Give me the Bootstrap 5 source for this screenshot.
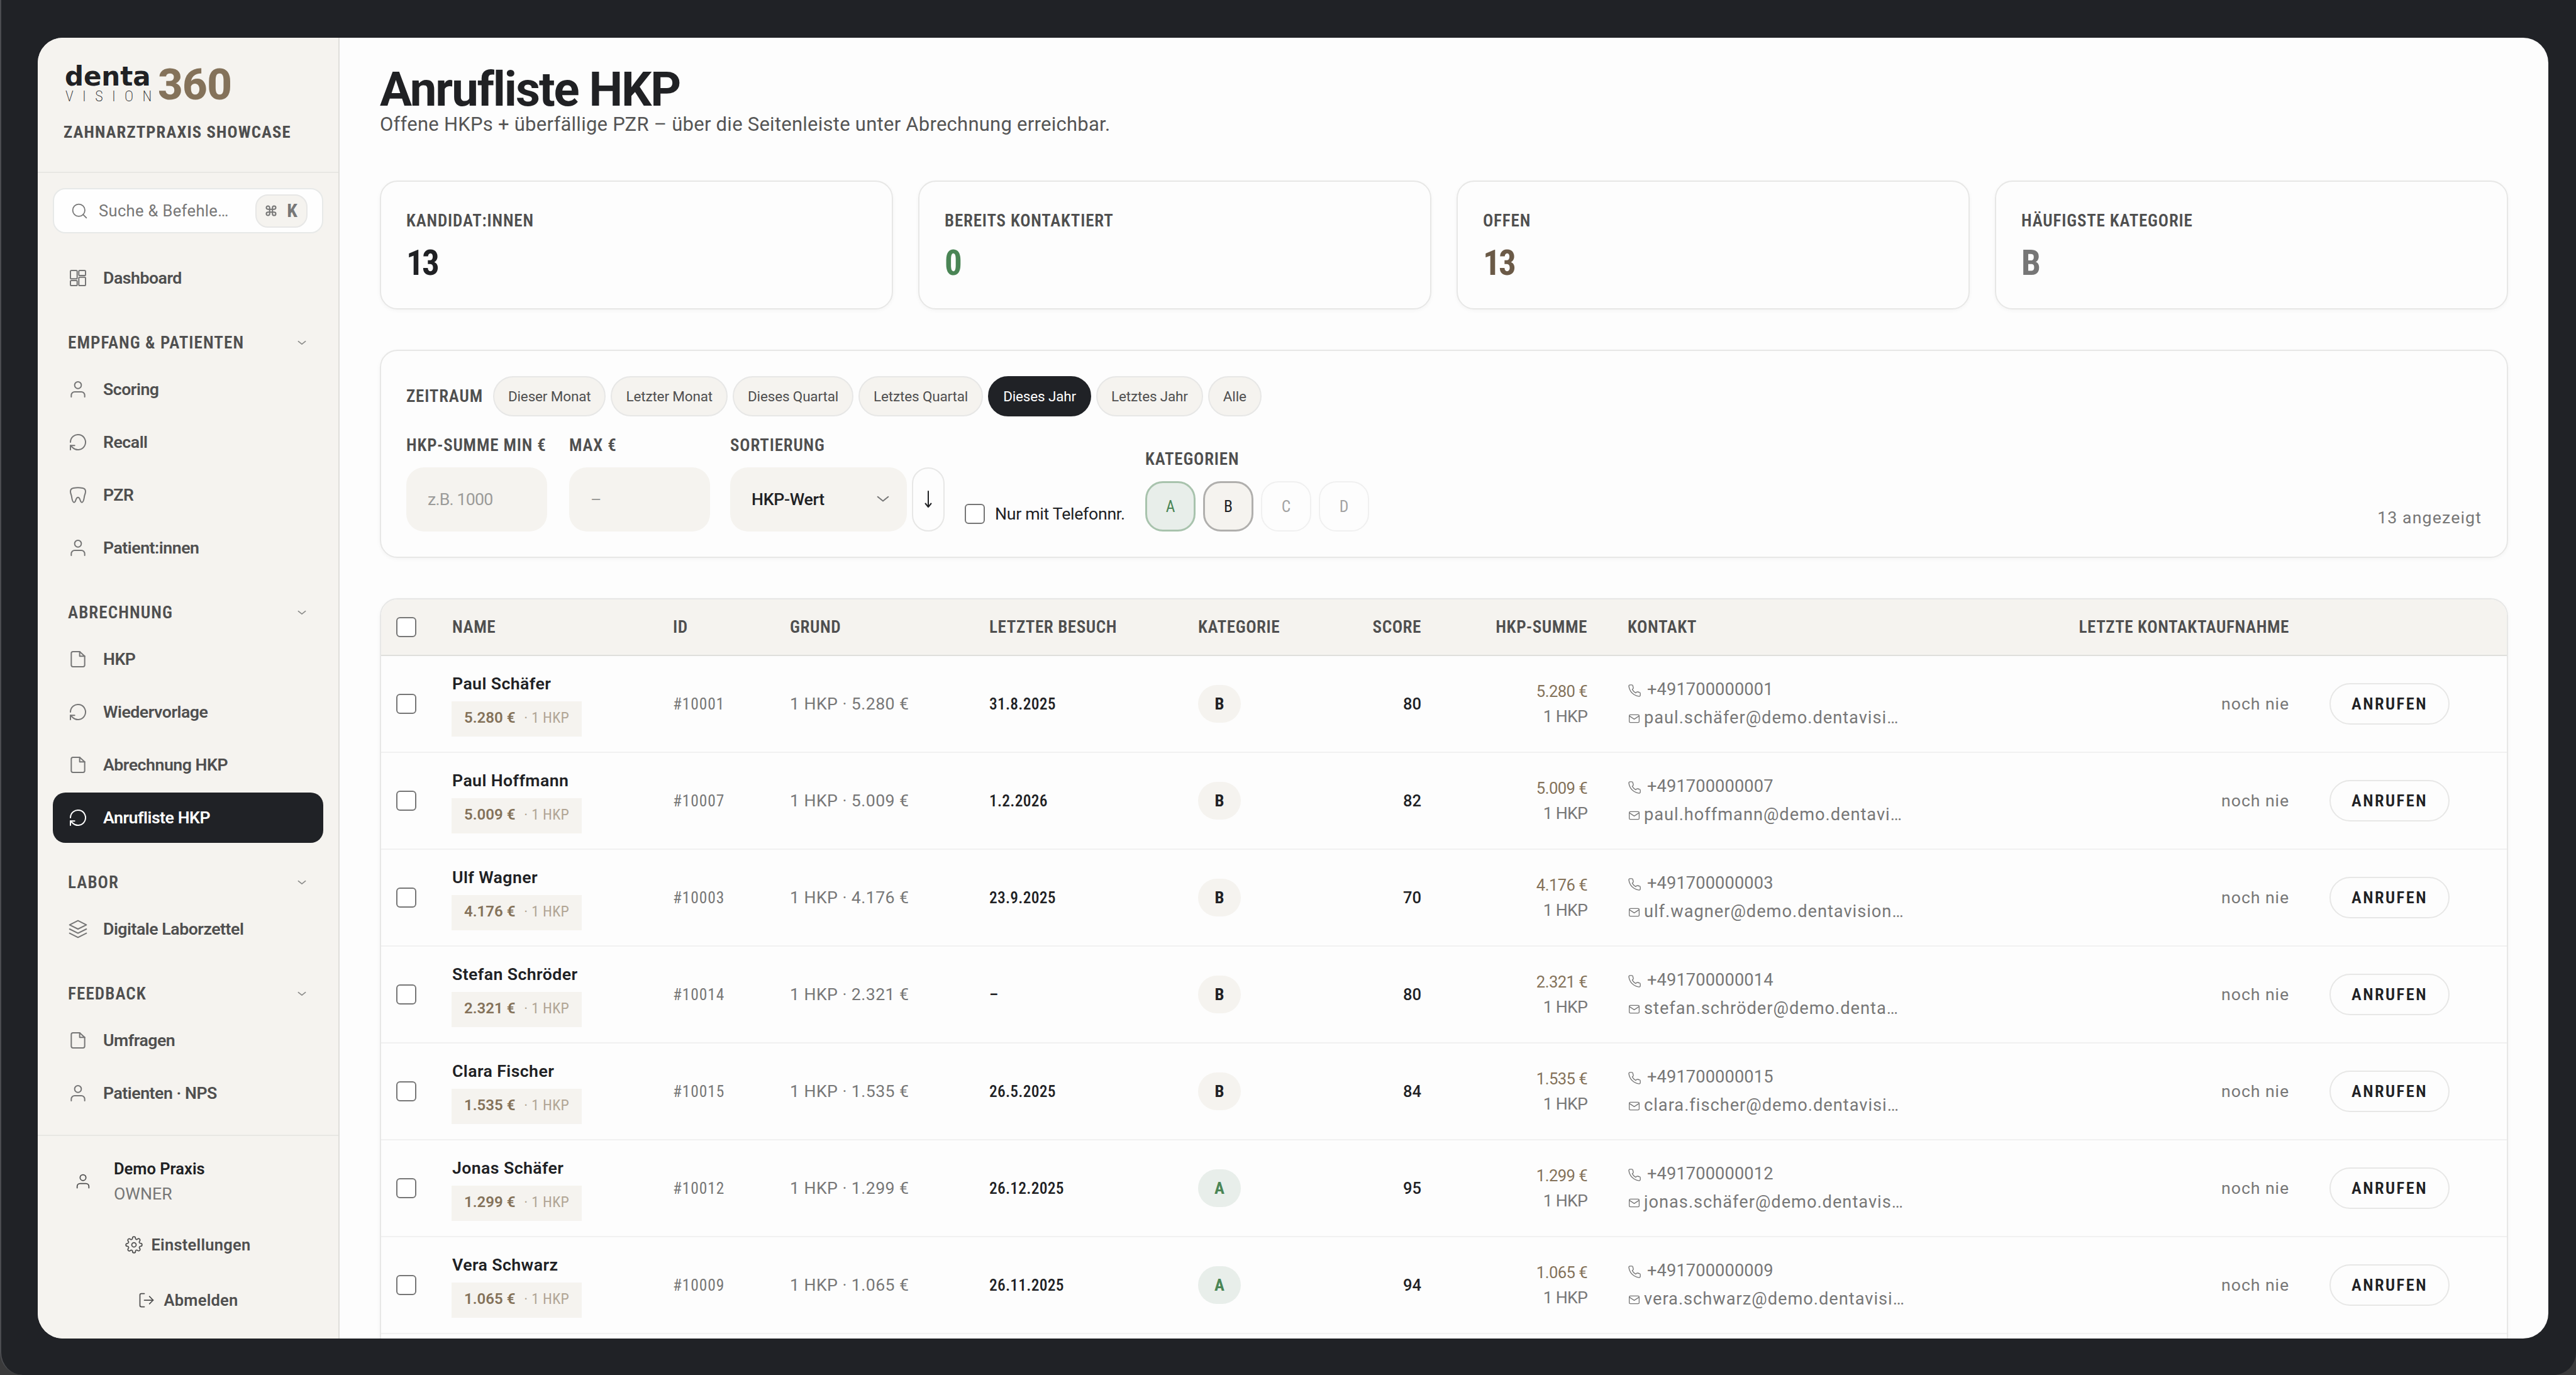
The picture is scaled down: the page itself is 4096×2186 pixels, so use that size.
<!DOCTYPE html>
<html lang="de">
<head>
	<meta charset="UTF-8" />
	<meta name="viewport" content="width=device-width, initial-scale=1.0" />
	<title>Anrufliste HKP</title>
	<link href="https://cdn.jsdelivr.net/npm/bootstrap@5.3.3/dist/css/bootstrap.min.css" rel="stylesheet" />

	<style>
		:root {
			--ink: #202124;
			--ink-2: #4f4f4f;
			--ink-3: #777777;
			--sand: #f5f3ef;
			--line: #e7e7e6;
			--gold: #84725a;
			--green: #4a8555;
		}

		html {
			background: #3a3a3b;
		}

		body {
			height: 2186px;
			margin: 0;
			padding: 60px 44px 58px 58px;
			background: #202226;
			border-left: 2px solid #4b4c50;
			border-radius: 0 0 36px 36px;
			overflow: hidden;
			color: var(--ink);
			font-family: Roboto, "Liberation Sans", sans-serif;
			font-size: 26.7px;
			line-height: 40px;
		}

		svg {
			fill: none;
			stroke: currentColor;
			stroke-width: 1.5;
			stroke-linecap: round;
			stroke-linejoin: round;
			flex: none;
		}

		.app {
			border-radius: 40px;
			background: #fdfdfd;
		}

		/* sidebar */
		.side {
			width: 480px;
			flex: none;
			background: var(--sand);
			border-right: 2px solid #dfdeda;
		}

		.side-head {
			height: 215px;
			padding: 44px 41px 0;
			border-bottom: 2px solid #e8e7e3;
		}

		.logo-text {
			width: 150px;
			padding-left: 2px;
		}

		.logo-denta {
			font: bold 42px/36px "DejaVu Sans", sans-serif;
			letter-spacing: -.1px;
		}

		.logo-vision {
			font-size: 24px;
			font-stretch: 75%;
			font-weight: 200;
			line-height: 26px;
			letter-spacing: 14.3px;
			padding-left: 1px;
			white-space: nowrap;
		}

		.logo-360 {
			font-size: 69px;
			font-weight: 800;
			line-height: 62px;
			letter-spacing: -.01em;
			color: var(--gold);
		}

		.praxis {
			font-stretch: 75%;
			font-weight: 700;
			letter-spacing: .041em;
			color: var(--ink-2);
			margin-top: 24px;
		}

		.search {
			height: 72px;
			margin: 24px 24px 31px;
			padding: 0 23px 0 26px;
			border: 2px solid #e7e9e8;
			border-radius: 20px;
			background: #fefefe;
			color: var(--ink-3);
			font-size: 25.5px;
			letter-spacing: .014em;
		}

		.keys {
			width: 83px;
			height: 53px;
			border: 2px solid var(--line);
			border-radius: 20px;
			background: var(--sand);
		}

		.keys svg {
			stroke-width: 2.8;
		}

		.keys b {
			font-size: 30px;
			font-stretch: 75%;
			letter-spacing: 0;
		}

		.side-item {
			height: 80px;
			margin: 0 24px 4px 24px;
			padding-left: 24px;
			gap: 24px;
			border-radius: 20px;
			font-weight: 600;
			letter-spacing: -.018em;
			color: var(--ink-2);
		}

		.side-item svg {
			width: 32px;
			height: 32px;
			color: #767676;
		}

		.side-item.active,
		.side-item.active svg {
			background: #202226;
			color: #fff;
		}

		.side-group {
			height: 93px;
			padding: 25px 51px 0 48px;
			font-stretch: 75%;
			font-weight: 600;
			font-size: 27.2px;
			letter-spacing: .038em;
			color: var(--ink-2);
		}

		.side-foot {
			height: 324px;
			padding: 32px 24px 0;
			border-top: 2px solid #e8e7e3;
			color: var(--ink-2);
		}

		.user-icon {
			margin: 0 35px 0 34px;
		}

		.user-name {
			font-weight: 600;
			font-size: 25.5px;
			color: var(--ink);
		}

		.side-btn {
			height: 80px;
			margin-bottom: 8px;
			gap: 13px;
			font-weight: 600;
			font-size: 25.5px;
			letter-spacing: .01em;
		}

		/* content */
		.content {
			padding: 45px 64px 0;
			min-width: 0;
		}

		.content h1 {
			font-size: 76px;
			font-weight: 700;
			line-height: 74px;
			letter-spacing: -.027em;
			margin: 0;
		}

		.sub {
			font-size: 31px;
			line-height: 37px;
			letter-spacing: .008em;
			color: #555;
			margin-bottom: 71px;
		}

		.panel {
			border: 2px solid var(--line);
			border-radius: 28px;
			box-shadow: 0 2px 6px rgba(0, 0, 0, .04);
		}

		.stat {
			height: 205px;
			padding: 42px 40px 41px;
			flex: 1;
		}

		.cap-label {
			font-stretch: 75%;
			font-weight: 600;
			font-size: 27px;
			color: var(--ink-2);
			letter-spacing: .031em;
			white-space: nowrap;
		}

		.stat-value {
			font-size: 55px;
			font-weight: 700;
			font-stretch: 75%;
			line-height: 60px;
			letter-spacing: -.05em;
			margin-top: 17px;
		}

		.filters {
			height: 331px;
			padding: 40px;
			margin: 64px 0;
		}

		.period {
			height: 64px;
			padding: 0 22px;
			border: 2px solid var(--line);
			border-radius: 32px;
			background: var(--sand);
			color: var(--ink-2);
			font-size: 22.5px;
			letter-spacing: -.007em;
		}

		.period.active {
			background: #202226;
			border-color: #202226;
			color: #fff;
		}

		.filter-label {
			line-height: 32px;
			margin-bottom: 20px;
			padding-top: 1px;
			height: 32px;
		}

		.field {
			height: 102px;
			padding: 0 34px;
			border-radius: 28px;
			background: var(--sand);
			letter-spacing: -.03em;
		}

		.sort-field {
			width: 281px;
			padding-right: 28px;
			font-weight: 500;
			letter-spacing: -.011em;
		}

		.sort-field svg {
			color: #767676;
			stroke-width: 1.2;
		}

		.dir-btn {
			width: 52px;
			height: 102px;
			border: 2px solid var(--line);
			border-radius: 26px;
		}

		.tick {
			display: block;
			flex: none;
			width: 32px;
			height: 32px;
			border: 2px solid #767676;
			border-radius: 6px;
			background: #fff;
		}

		.phone-only {
			width: 255px;
			height: 57px;
			letter-spacing: -.011em;
			white-space: nowrap;
		}

		.cat-btn {
			width: 80px;
			height: 80px;
			border: 2px solid #f0f0f0;
			border-radius: 28px;
			color: #a3a3a3;
			font-size: 25.5px;
			font-stretch: 75%;
		}

		.cat-a {
			border: 3px solid #a8c3ad;
			background: #e8eeea;
			color: var(--green);
		}

		.cat-b {
			border: 3px solid #b0afad;
			background: var(--sand);
			color: var(--ink);
		}

		.shown {
			line-height: 44px;
			letter-spacing: .042em;
		}

		/* call list */
		.calls {
			height: 1300px;
			overflow: hidden;
			flex: none;
		}

		.calls table {
			width: 3380px;
			table-layout: fixed;
			white-space: nowrap;
		}

		.calls th {
			height: 89px;
			padding: 0 32px;
			background: var(--sand);
			border-bottom: 2px solid #dfdfdc;
			color: var(--ink-2);
			font-size: 27.2px;
			font-stretch: 75%;
			font-weight: 600;
			letter-spacing: .02em;
		}

		.calls td {
			height: 154px;
			padding: 0 32px;
			border-bottom: 2px solid #f1f1f1;
			vertical-align: middle;
		}

		.calls th:first-child,
		.calls td:first-child {
			padding: 0 24px;
		}

		.who {
			font-weight: 600;
			letter-spacing: .015em;
		}

		.sum-tag {
			display: inline-flex;
			gap: 14px;
			height: 56px;
			line-height: 53px;
			margin: 8px 0 0 -1px;
			padding: 0 20px;
			background: var(--sand);
			color: var(--gold);
			font-size: 24px;
		}

		.sum-tag b {
			font-weight: 600;
			letter-spacing: 0;
		}

		.sum-tag span {
			font-stretch: 75%;
			letter-spacing: .01em;
			opacity: .6;
		}

		.muted {
			color: var(--ink-3);
		}

		.num {
			font-size: 25.5px;
		}

		.id {
			font-stretch: 75%;
			letter-spacing: .034em;
		}

		.visit {
			font-stretch: 75%;
			font-weight: 500;
			letter-spacing: .01em;
		}

		.grade {
			display: flex;
			align-items: center;
			justify-content: center;
			width: 68px;
			height: 60px;
			border-radius: 30px;
			background: var(--sand);
			font-weight: 700;
			font-stretch: 75%;
		}

		.grade-A {
			background: #e8eeea;
			color: var(--green);
		}

		.reach {
			line-height: 45px;
			font-size: 27.2px;
		}

		.call-btn {
			display: flex;
			align-items: center;
			justify-content: center;
			width: 191px;
			height: 66px;
			border: 2px solid var(--line);
			border-radius: 33px;
			font-stretch: 75%;
			font-weight: 600;
			letter-spacing: .09em;
		}
	</style>
</head>
<body>

	<svg class="d-none">
		<symbol id="i-grid" viewBox="0 0 24 24"><rect x="3" y="3" width="8" height="10" rx="1.2"/><rect x="13" y="3" width="8" height="6" rx="1.2"/><rect x="13" y="11" width="8" height="10" rx="1.2"/><rect x="3" y="15" width="8" height="6" rx="1.2"/></symbol>
		<symbol id="i-user" viewBox="0 0 24 24"><path d="M20 21v-2a4 4 0 0 0-4-4H8a4 4 0 0 0-4 4v2"/><circle cx="12" cy="7" r="4"/></symbol>
		<symbol id="i-recall" viewBox="0 0 24 24"><path d="M3 12a9 9 0 1 1 3 6.7L3 16"/><path d="M3 21v-5h5"/></symbol>
		<symbol id="i-tooth" viewBox="0 0 24 24"><path d="M12 3.2c-2.5 0-3.7.2-5.5.5C4.2 4.1 3 5.3 3 7.7c0 2.5 1 3.5 1.4 6 .4 3 .8 7.1 3 7.1 2.4 0 1.6-6 4.6-6s2.2 6 4.6 6c2.2 0 2.6-4.1 3-7.1.4-2.5 1.4-3.5 1.4-6 0-2.4-1.2-3.6-3.5-4-1.8-.3-3-.5-5.5-.5z"/></symbol>
		<symbol id="i-file" viewBox="0 0 24 24"><path d="M14 3H6a2 2 0 0 0-2 2v14a2 2 0 0 0 2 2h12a2 2 0 0 0 2-2V8.500z"/><path d="M14 3v5.500h6"/></symbol>
		<symbol id="i-layers" viewBox="0 0 24 24"><path d="M12 2L2 7l10 5 10-5z"/><path d="M2 17l10 5 10-5"/><path d="M2 12l10 5 10-5"/></symbol>
		<symbol id="i-search" viewBox="0 0 24 24"><circle cx="11" cy="11" r="8"/><path d="M21 21l-4.350-4.350"/></symbol>
		<symbol id="i-chevron" viewBox="0 0 12 8"><path d="M1 1.500l5 4 5-4"/></symbol>
		<symbol id="i-gear" viewBox="0 0 24 24"><circle cx="12" cy="12" r="3"/><path d="M19.400 15a1.650 1.650 0 0 0 .33 1.820l.06.06a2 2 0 0 1 0 2.830 2 2 0 0 1-2.830 0l-.06-.06a1.650 1.650 0 0 0-1.820-.33 1.650 1.650 0 0 0-1 1.510V21a2 2 0 0 1-2 2 2 2 0 0 1-2-2v-.09A1.650 1.650 0 0 0 9 19.400a1.650 1.650 0 0 0-1.820.33l-.06.06a2 2 0 0 1-2.830 0 2 2 0 0 1 0-2.830l.06-.06a1.650 1.650 0 0 0 .33-1.820 1.650 1.650 0 0 0-1.510-1H3a2 2 0 0 1-2-2 2 2 0 0 1 2-2h.09A1.650 1.650 0 0 0 4.600 9a1.650 1.650 0 0 0-.33-1.820l-.06-.06a2 2 0 0 1 0-2.830 2 2 0 0 1 2.830 0l.06.06a1.650 1.650 0 0 0 1.820.33H9a1.650 1.650 0 0 0 1-1.510V3a2 2 0 0 1 2-2 2 2 0 0 1 2 2v.09a1.650 1.650 0 0 0 1 1.510 1.650 1.650 0 0 0 1.820-.33l.06-.06a2 2 0 0 1 2.830 0 2 2 0 0 1 0 2.830l-.06.06a1.650 1.650 0 0 0-.33 1.820V9a1.650 1.650 0 0 0 1.510 1H21a2 2 0 0 1 2 2 2 2 0 0 1-2 2h-.09a1.650 1.650 0 0 0-1.510 1z"/></symbol>
		<symbol id="i-logout" viewBox="0 0 24 24"><path d="M9 21H5a2 2 0 0 1-2-2V5a2 2 0 0 1 2-2h4"/><path d="M16 17l5-5-5-5"/><path d="M21 12H9"/></symbol>
		<symbol id="i-phone" viewBox="0 0 24 24"><path d="M22 16.920v3a2 2 0 0 1-2.180 2 19.790 19.790 0 0 1-8.630-3.070 19.500 19.500 0 0 1-6-6 19.790 19.790 0 0 1-3.070-8.670A2 2 0 0 1 4.110 2h3a2 2 0 0 1 2 1.720 12.840 12.840 0 0 0 .7 2.810 2 2 0 0 1-.45 2.110L8.090 9.910a16 16 0 0 0 6 6l1.270-1.270a2 2 0 0 1 2.110-.45 12.840 12.840 0 0 0 2.810.7A2 2 0 0 1 22 16.920z"/></symbol>
		<symbol id="i-mail" viewBox="0 0 24 24"><rect x="3" y="5" width="18" height="14" rx="2"/><path d="M3 7l9 6 9-6"/></symbol>
	</svg>

	<div class="app d-flex h-100 overflow-hidden">

		<aside class="side d-flex flex-column">
			<div class="side-head">
				<div class="d-flex align-items-center">
					<div class="logo-text">
						<div class="logo-denta">denta</div>
						<div class="logo-vision">VISION</div>
					</div>
					<div class="logo-360">360</div>
				</div>
				<div class="praxis">ZAHNARZTPRAXIS SHOWCASE</div>
			</div>

			<div class="search d-flex align-items-center">
				<svg width="29" height="29"><use href="#i-search"/></svg>
				<span class="ms-3 me-auto">Suche &amp; Befehle…</span>
				<div class="keys d-flex align-items-center justify-content-center gap-3">
					<svg width="18" height="18" viewBox="0 0 24 24"><path d="M9 9H5.500A3.500 3.500 0 1 1 9 5.500v13A3.500 3.500 0 1 1 5.500 15h13a3.500 3.500 0 1 1-3.500 3.500v-13A3.500 3.500 0 1 1 18.500 9z"/></svg>
					<b>K</b>
				</div>
			</div>

			<nav class="flex-grow-1 overflow-hidden" id="menu"></nav>

			<div class="side-foot">
				<div class="d-flex align-items-center" style="margin-bottom: 21px">
					<svg class="user-icon" width="28" height="28"><use href="#i-user"/></svg>
					<div>
						<div class="user-name">Demo Praxis</div>
						<div class="muted">OWNER</div>
					</div>
				</div>
				<div class="side-btn d-flex align-items-center justify-content-center"><svg width="28" height="28"><use href="#i-gear"/></svg>Einstellungen</div>
				<div class="side-btn d-flex align-items-center justify-content-center"><svg width="28" height="28"><use href="#i-logout"/></svg>Abmelden</div>
			</div>
		</aside>

		<main class="content flex-grow-1 d-flex flex-column overflow-hidden">
			<h1>Anrufliste HKP</h1>
			<div class="sub">Offene HKPs + überfällige PZR – über die Seitenleiste unter Abrechnung erreichbar.</div>

			<div class="d-flex" style="gap: 40px">
				<div class="panel stat">
					<div class="cap-label">KANDIDAT:INNEN</div>
					<div class="stat-value">13</div>
				</div>
				<div class="panel stat">
					<div class="cap-label">BEREITS KONTAKTIERT</div>
					<div class="stat-value" style="color: #4a8555">0</div>
				</div>
				<div class="panel stat">
					<div class="cap-label">OFFEN</div>
					<div class="stat-value" style="color: #6b5a47">13</div>
				</div>
				<div class="panel stat">
					<div class="cap-label">HÄUFIGSTE KATEGORIE</div>
					<div class="stat-value" style="color: #767676">B</div>
				</div>
			</div>

			<div class="panel filters">
				<div class="d-flex align-items-center gap-2">
					<div class="cap-label me-2">ZEITRAUM</div>
					<div class="period d-flex align-items-center">Dieser Monat</div>
					<div class="period d-flex align-items-center">Letzter Monat</div>
					<div class="period d-flex align-items-center">Dieses Quartal</div>
					<div class="period d-flex align-items-center">Letztes Quartal</div>
					<div class="period active d-flex align-items-center">Dieses Jahr</div>
					<div class="period d-flex align-items-center">Letztes Jahr</div>
					<div class="period d-flex align-items-center">Alle</div>
				</div>

				<div class="d-flex align-items-end" style="gap: 32px; margin-top: 29px">
					<div style="width: 227px">
						<div class="cap-label filter-label">HKP-SUMME MIN €</div>
						<div class="field d-flex align-items-center" style="width: 224px; color: #9b9b99">z.B. 1000</div>
					</div>
					<div style="width: 224px">
						<div class="cap-label filter-label">MAX €</div>
						<div class="field d-flex align-items-center" style="color: #9b9b99">–</div>
					</div>
					<div>
						<div class="cap-label filter-label">SORTIERUNG</div>
						<div class="d-flex gap-2">
							<div class="field sort-field d-flex align-items-center justify-content-between">HKP-Wert <svg width="20" height="14"><use href="#i-chevron"/></svg></div>
							<div class="dir-btn d-flex align-items-center justify-content-center"><svg width="16" height="28" viewBox="0 0 16 28" style="stroke-width: 2"><path d="M8 1v24M3.500 20.500L8 26l4.500-5.500"/></svg></div>
						</div>
					</div>
					<div class="phone-only d-flex align-items-center gap-3">
						<span class="tick"></span><span>Nur mit Telefonnr.</span>
					</div>
					<div>
						<div class="cap-label filter-label">KATEGORIEN</div>
						<div class="d-flex" style="gap: 12px">
							<div class="cat-btn cat-a d-flex align-items-center justify-content-center">A</div>
							<div class="cat-btn cat-b d-flex align-items-center justify-content-center">B</div>
							<div class="cat-btn d-flex align-items-center justify-content-center">C</div>
							<div class="cat-btn d-flex align-items-center justify-content-center">D</div>
						</div>
					</div>
					<div class="shown ms-auto muted">13 angezeigt</div>
				</div>
			</div>

			<div class="panel calls">
				<table>
					<colgroup>
						<col style="width: 81px"><col style="width: 351px"><col style="width: 186px"><col style="width: 317px">
						<col style="width: 332px"><col style="width: 276px"><col style="width: 143px"><col style="width: 264px">
						<col style="width: 716px"><col style="width: 400px"><col style="width: 314px">
					</colgroup>
					<thead>
						<tr>
							<th><span class="tick"></span></th>
							<th>NAME</th>
							<th>ID</th>
							<th>GRUND</th>
							<th>LETZTER BESUCH</th>
							<th>KATEGORIE</th>
							<th class="text-end">SCORE</th>
							<th class="text-end">HKP-SUMME</th>
							<th>KONTAKT</th>
							<th class="text-end">LETZTE KONTAKTAUFNAHME</th>
							<th></th>
						</tr>
					</thead>
					<tbody id="rows"></tbody>
				</table>
			</div>
		</main>
	</div>

	<script src="https://cdn.jsdelivr.net/npm/bootstrap@5.3.3/dist/js/bootstrap.bundle.min.js"></script>
	<script>
		// Entries without an icon are group headings.
		const menu = [
			['Dashboard', 'grid'],
			['EMPFANG & PATIENTEN'],
			['Scoring', 'user'],
			['Recall', 'recall'],
			['PZR', 'tooth'],
			['Patient:innen', 'user'],
			['ABRECHNUNG'],
			['HKP', 'file'],
			['Wiedervorlage', 'recall'],
			['Abrechnung HKP', 'file'],
			['Anrufliste HKP', 'recall'],
			['LABOR'],
			['Digitale Laborzettel', 'layers'],
			['FEEDBACK'],
			['Umfragen', 'file'],
			['Patienten · NPS', 'user'],
		];

		document.getElementById('menu').innerHTML = menu.map(([label, icon]) => icon
			? `<div class="side-item d-flex align-items-center ${label === 'Anrufliste HKP' ? 'active' : ''}"><svg><use href="#i-${icon}"/></svg>${label}</div>`
			: `<div class="side-group d-flex align-items-center justify-content-between"><span>${label.replace('&', '&amp;')}</span><svg width="14" height="9" style="color: #8a8a88"><use href="#i-chevron"/></svg></div>`
		).join('');

		const patients = [
			['Paul Schäfer', '5.280', '10001', '31.8.2025', 'B', 80, 'paul.schäfer@demo.dentavisi…'],
			['Paul Hoffmann', '5.009', '10007', '1.2.2026', 'B', 82, 'paul.hoffmann@demo.dentavi…'],
			['Ulf Wagner', '4.176', '10003', '23.9.2025', 'B', 70, 'ulf.wagner@demo.dentavision…'],
			['Stefan Schröder', '2.321', '10014', '–', 'B', 80, 'stefan.schröder@demo.denta…'],
			['Clara Fischer', '1.535', '10015', '26.5.2025', 'B', 84, 'clara.fischer@demo.dentavisi…'],
			['Jonas Schäfer', '1.299', '10012', '26.12.2025', 'A', 95, 'jonas.schäfer@demo.dentavis…'],
			['Vera Schwarz', '1.065', '10009', '26.11.2025', 'A', 94, 'vera.schwarz@demo.dentavisi…'],
		];

		document.getElementById('rows').innerHTML = patients.map(([name, sum, id, visit, grade, score, mail]) => `
			<tr>
				<td><span class="tick"></span></td>
				<td><div class="who">${name}</div><div class="sum-tag"><b>${sum} €</b><span>· 1 HKP</span></div></td>
				<td class="muted num id">#${id}</td>
				<td class="muted" style="letter-spacing: .016em">1 HKP · ${sum} €</td>
				<td class="num visit">${visit}</td>
				<td><span class="grade grade-${grade}">${grade}</span></td>
				<td class="text-end num" style="font-weight: 500">${score}</td>
				<td class="text-end">
					<div class="num" style="color: #84725a; letter-spacing: -.02em">${sum} €</div>
					<div class="muted" style="letter-spacing: -.03em">1 HKP</div>
				</td>
				<td class="muted reach">
					<div style="letter-spacing: .005em"><svg width="22" height="22" style="margin-right: 9px"><use href="#i-phone"/></svg>+4917000000${id.slice(-2)}</div>
					<div style="letter-spacing: .037em"><svg width="21" height="21" style="margin-right: 5px"><use href="#i-mail"/></svg>${mail}</div>
				</td>
				<td class="text-end muted" style="letter-spacing: .034em">noch nie</td>
				<td><span class="call-btn">ANRUFEN</span></td>
			</tr>`).join('');
	</script>
</body>
</html>
